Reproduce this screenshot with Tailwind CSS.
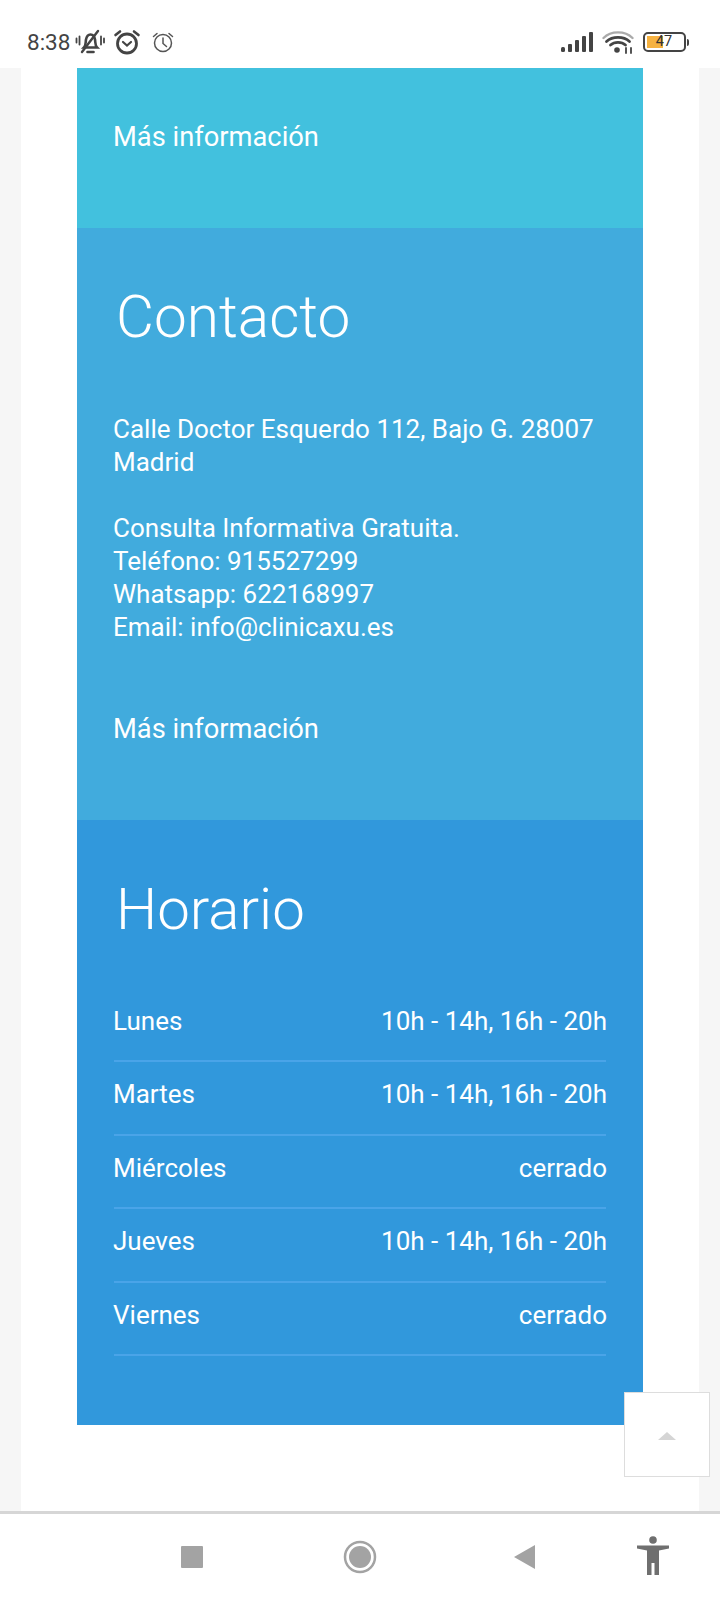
<!DOCTYPE html>
<html lang="es">
<head>
  <meta charset="UTF-8" />
  <meta name="viewport" content="width=device-width, initial-scale=1" />
  <title>Clínica Axu</title>
  <script src="https://cdn.jsdelivr.net/npm/@tailwindcss/browser@4"></script>
</head>
<body class="bg-white w-[720px] h-[1600px] overflow-hidden relative font-['Roboto',sans-serif] text-white">

  <!-- Status bar -->
  <div class="h-[68px] bg-white flex items-start justify-between pt-[28px] pl-[27px] pr-[31px] text-[#444]">
    <div class="flex items-center gap-[4px] h-[28px]">
      <span class="text-[22.500px] leading-[28px]">8:38</span>
      <svg class="ml-[1px]" width="30" height="26" viewBox="0 0 30 26" fill="none" stroke="#444" stroke-width="2.600" stroke-linecap="round">
        <path d="M9 18.500c2-2 1.500-5 2-8 .6-3 2.500-5 4.500-5s4 2 4.500 5c.5 3 0 6 2 8z" />
        <path d="M12.500 23h6" />
        <path d="M7 23 23 2" stroke-width="2.400" />
        <path d="M1.500 9.500v4M4.500 7.500v8M26 7.500v8M29 9.500v4" stroke-width="1.800" />
      </svg>
      <svg class="ml-[4px]" width="28" height="28" viewBox="0 0 28 28" fill="none" stroke="#444" stroke-linecap="round">
        <circle cx="14" cy="15.500" r="9.500" stroke-width="2.800" />
        <path d="M10 14l4 3.500 4-3.500" stroke-width="2.200" />
        <path d="M2.500 7l4.500-3.500M25.500 7L21 3.500" stroke-width="2.600" />
      </svg>
      <svg class="ml-[6px]" width="24" height="24" viewBox="0 0 24 24" fill="none" stroke="#555" stroke-linecap="round" stroke-width="1.500">
        <circle cx="12" cy="13" r="8.500" />
        <path d="M12 8v5.500l3.500 3" />
        <path d="M2.500 6.500 6 3.500M21.500 6.500 18 3.500" />
      </svg>
    </div>
    <div class="flex items-center gap-[9px] h-[28px]">
      <svg width="32" height="22" viewBox="0 0 32 22" fill="#444">
        <rect x="0" y="16" width="4" height="5" rx="1.500" />
        <rect x="7" y="13" width="4" height="8" rx="1" />
        <rect x="14" y="9" width="4" height="12" rx="1" />
        <rect x="21" y="5" width="4" height="16" rx="1" />
        <rect x="28" y="1" width="4" height="20" rx="1" />
      </svg>
      <svg width="32" height="26" viewBox="0 0 32 26" fill="none" stroke-linecap="round">
        <path d="M1.500 9C9 1.500 23 1.500 30.500 9" stroke="#aaa" stroke-width="2.400" />
        <path d="M4.500 12.500c6-5.500 17-5.500 23 0" stroke="#444" stroke-width="2.800" />
        <path d="M8.500 16c4-3.500 11-3.500 15 0" stroke="#444" stroke-width="2.800" />
        <circle cx="15" cy="21" r="2.800" fill="#444" />
        <path d="M24 19v5M29 19v5" stroke="#444" stroke-width="1.800" />
      </svg>
      <div class="flex items-center">
        <div class="relative w-[43px] h-[20px] border-[2.500px] border-[#444] rounded-[5px] overflow-hidden">
          <div class="absolute left-[2px] top-[2px] bottom-[2px] w-[16px] bg-[#f6b240]"></div>
          <span class="absolute inset-0 flex items-center justify-center text-[14.500px] leading-none text-[#333]">47</span>
        </div>
        <div class="w-[2.500px] h-[7px] ml-[1px] bg-[#444] rounded-r"></div>
      </div>
    </div>
  </div>

  <!-- Page -->
  <div class="h-[1444px] bg-[#f6f6f6] overflow-hidden">
    <div class="w-[678px] h-[1444px] ml-[21px] bg-white px-[56px]">

      <div class="h-[160px] bg-[#42c1de] pl-[36px] pt-[53px]">
        <p class="text-[27.300px] leading-[33px]">Más información</p>
      </div>

      <div class="h-[592px] bg-[#41abdd] pl-[36px] pt-[53px]">
        <h2 class="font-light text-[58.500px] leading-[72px] ml-[3px]">Contacto</h2>
        <p class="text-[26px] leading-[33px] mt-[60px] w-[490px]">Calle Doctor Esquerdo 112, Bajo G. 28007 Madrid</p>
        <p class="text-[26px] leading-[33px] mt-[33px]">Consulta Informativa Gratuita.<br />Teléfono: 915527299<br />Whatsapp: 622168997<br />Email: info@clinicaxu.es</p>
        <p class="text-[27.300px] leading-[33px] mt-[69px]">Más información</p>
      </div>

      <div class="h-[605px] bg-[#3198dc] px-[37px] pt-[53px]">
        <h2 class="font-light text-[58.200px] leading-[72px] ml-[2px]">Horario</h2>
        <ul class="mt-[44px] text-[26px] leading-[33px]">
          <li class="flex justify-between h-[73.400px] pt-[16px] border-b-2 border-[#4aa4e8]"><span class="-ml-[1px]">Lunes</span><span class="-mr-[1px]">10h - 14h, 16h - 20h</span></li>
          <li class="flex justify-between h-[73.400px] pt-[16px] border-b-2 border-[#4aa4e8]"><span class="-ml-[1px]">Martes</span><span class="-mr-[1px]">10h - 14h, 16h - 20h</span></li>
          <li class="flex justify-between h-[73.400px] pt-[16px] border-b-2 border-[#4aa4e8]"><span class="-ml-[1px]">Miércoles</span><span class="-mr-[1px]">cerrado</span></li>
          <li class="flex justify-between h-[73.400px] pt-[16px] border-b-2 border-[#4aa4e8]"><span class="-ml-[1px]">Jueves</span><span class="-mr-[1px]">10h - 14h, 16h - 20h</span></li>
          <li class="flex justify-between h-[73.400px] pt-[16px] border-b-2 border-[#4aa4e8]"><span class="-ml-[1px]">Viernes</span><span class="-mr-[1px]">cerrado</span></li>
        </ul>
      </div>
    </div>
  </div>

  <!-- Back to top -->
  <div class="absolute left-[624px] top-[1392px] w-[86px] h-[85px] bg-white border border-[#ddd] flex items-center justify-center">
    <div class="w-0 h-0 border-l-[9px] border-r-[9px] border-b-[8px] border-l-transparent border-r-transparent border-b-[#d5d5d5] mt-[3px]"></div>
  </div>

  <!-- Nav bar -->
  <div class="absolute left-0 right-0 top-[1511px] h-[89px] bg-white border-t-[3px] border-[#d6d6d6]">
    <div class="relative h-full">
      <div class="absolute left-[181px] top-[32px] w-[22px] h-[22px] bg-[#a3a3a3] rounded-[1px]"></div>
      <svg class="absolute left-[343px] top-[25px]" width="34" height="36" viewBox="0 0 34 36" fill="none">
        <circle cx="17" cy="18" r="15" stroke="#a3a3a3" stroke-width="2.500" />
        <circle cx="17" cy="18" r="11" fill="#a3a3a3" />
      </svg>
      <svg class="absolute left-[513px] top-[30px]" width="23" height="26" viewBox="0 0 23 26" fill="#a3a3a3">
        <path d="M22 1v24L1 13z" />
      </svg>
      <svg class="absolute left-[635px] top-[22px]" width="36" height="40" viewBox="0 0 36 40" fill="#6f6f6f">
        <circle cx="18" cy="4" r="3.800" />
        <path d="M2 9.500h32v3l-10 2V39h-4.500V27h-3v12H12V14.500L2 12.500z" />
      </svg>
    </div>
  </div>

</body>
</html>
